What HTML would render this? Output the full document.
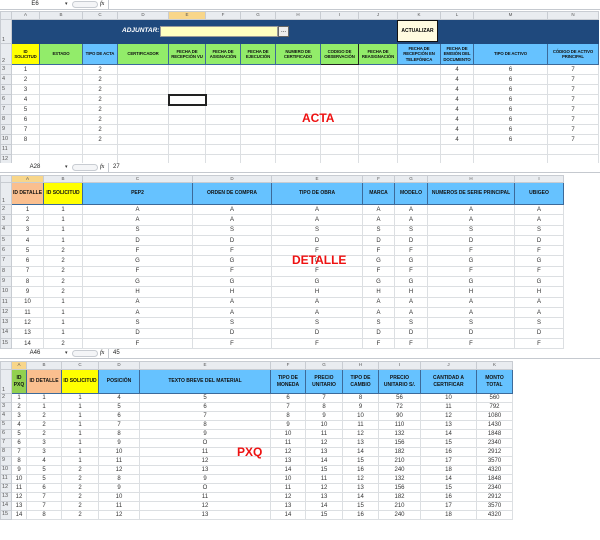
<!DOCTYPE html>
<html><head><meta charset="utf-8"><style>
*{margin:0;padding:0;box-sizing:border-box}
body{width:600px;height:540px;background:#fff;position:relative;overflow:hidden;font-family:"Liberation Sans",sans-serif}
.fb{position:absolute;left:0;width:600px;height:10px;background:#fff;border-bottom:1px solid #c5c9cf}
.fb .nb{position:absolute;left:0;top:0;width:70px;height:9px;font-size:6px;line-height:9px;text-align:center;color:#222}
.fb .ar{position:absolute;left:65px;top:0;font-size:5px;line-height:9px;color:#333}
.fb .pill{position:absolute;left:72px;top:1px;width:26px;height:7px;border:1px solid #c8ccd2;border-radius:4px;background:#f4f5f7}
.fb .fx{position:absolute;left:100px;top:0;font-size:6px;line-height:9px;font-style:italic;font-family:"Liberation Serif",serif}
.fb .dv{position:absolute;left:108px;top:0;width:1px;height:10px;background:#c5c9cf}
.fb .v{position:absolute;left:113px;top:0;font-size:6px;line-height:9px;color:#222}
table{position:absolute;border-collapse:collapse;table-layout:fixed}
td{border:1px solid #dcdfe2;font-size:6px;text-align:center;padding:0;overflow:hidden;white-space:nowrap;color:#333;line-height:1}
td.c{background:#e9ecf0;color:#555;font-size:4.5px;border-color:#c8ccd2}
td.s{background:#f8d68a}
td.r{background:#e9ecf0;color:#555;font-size:5.5px;text-align:left;padding-left:1px;border-color:#c8ccd2}
td.h{font-weight:bold;font-size:5px;color:#111;white-space:normal;line-height:1.3;border:1px solid #3c6a9a}
.t1 td.h{font-size:4.3px;letter-spacing:-0.1px;line-height:1.25}
.y{background:#ffff00}.g{background:#92ec6a}.b{background:#66c2ff}.p{background:#fabf8f}.gg{background:#92d050}
.lbl{position:absolute;color:#ee1111;font-weight:bold;font-size:12px}
</style></head><body>

<div class="fb" style="top:0"><div class="nb">E6</div><div class="ar">▾</div><div class="pill"></div><div class="fx">fx</div><div class="dv"></div></div>

<table class="t1" style="left:0;top:11px;width:598px">
<colgroup><col style="width:11px"><col style="width:28px"><col style="width:43px"><col style="width:35px"><col style="width:51px"><col style="width:37px"><col style="width:35px"><col style="width:35px"><col style="width:45px"><col style="width:38px"><col style="width:39px"><col style="width:43px"><col style="width:33px"><col style="width:74px"><col style="width:51px"></colgroup>
<tr style="height:8px"><td class="c"></td><td class="c">A</td><td class="c">B</td><td class="c">C</td><td class="c">D</td><td class="c s">E</td><td class="c">F</td><td class="c">G</td><td class="c">H</td><td class="c">I</td><td class="c">J</td><td class="c">K</td><td class="c">L</td><td class="c">M</td><td class="c">N</td></tr>
<tr style="height:24px"><td class="r" style="vertical-align:bottom">1</td><td colspan="14" style="background:#1f497d;border-color:#1f497d"></td></tr>
<tr style="height:21px"><td class="r" style="vertical-align:bottom">2</td><td class="h y">ID<br>SOLICITUD</td><td class="h g">ESTADO</td><td class="h b">TIPO DE ACTA</td><td class="h g">CERTIFICADOR</td><td class="h g">FECHA DE RECEPCIÓN VU</td><td class="h g">FECHA DE ASIGNACIÓN</td><td class="h g">FECHA DE EJECUCIÓN</td><td class="h g">NUMERO DE CERTIFICADO</td><td class="h g" style="border:1px solid #222">CODIGO DE OBSERVACIÓN</td><td class="h g">FECHA DE REASIGNACIÓN</td><td class="h b">FECHA DE RECEPCIÓN EN TELEFÓNICA</td><td class="h b">FECHA DE EMISIÓN DEL DOCUMENTO</td><td class="h b">TIPO DE ACTIVO</td><td class="h b">CÓDIGO DE ACTIVO PRINCIPAL</td></tr>
<tr style="height:10px"><td class="r">3</td><td>1</td><td></td><td>2</td><td></td><td></td><td></td><td></td><td></td><td></td><td></td><td></td><td>4</td><td>6</td><td>7</td></tr>
<tr style="height:10px"><td class="r">4</td><td>2</td><td></td><td>2</td><td></td><td></td><td></td><td></td><td></td><td></td><td></td><td></td><td>4</td><td>6</td><td>7</td></tr>
<tr style="height:10px"><td class="r">5</td><td>3</td><td></td><td>2</td><td></td><td></td><td></td><td></td><td></td><td></td><td></td><td></td><td>4</td><td>6</td><td>7</td></tr>
<tr style="height:10px"><td class="r s">6</td><td>4</td><td></td><td>2</td><td></td><td style="border:2px solid #222"></td><td></td><td></td><td></td><td></td><td></td><td></td><td>4</td><td>6</td><td>7</td></tr>
<tr style="height:10px"><td class="r">7</td><td>5</td><td></td><td>2</td><td></td><td></td><td></td><td></td><td></td><td></td><td></td><td></td><td>4</td><td>6</td><td>7</td></tr>
<tr style="height:10px"><td class="r">8</td><td>6</td><td></td><td>2</td><td></td><td></td><td></td><td></td><td></td><td></td><td></td><td></td><td>4</td><td>6</td><td>7</td></tr>
<tr style="height:10px"><td class="r">9</td><td>7</td><td></td><td>2</td><td></td><td></td><td></td><td></td><td></td><td></td><td></td><td></td><td>4</td><td>6</td><td>7</td></tr>
<tr style="height:10px"><td class="r">10</td><td>8</td><td></td><td>2</td><td></td><td></td><td></td><td></td><td></td><td></td><td></td><td></td><td>4</td><td>6</td><td>7</td></tr>
<tr style="height:10px"><td class="r">11</td><td></td><td></td><td></td><td></td><td></td><td></td><td></td><td></td><td></td><td></td><td></td><td></td><td></td><td></td></tr>
<tr style="height:10px"><td class="r">12</td><td></td><td></td><td></td><td></td><td></td><td></td><td></td><td></td><td></td><td></td><td></td><td></td><td></td><td></td></tr>
</table>
<div style="position:absolute;left:122px;top:27px;color:#fff;font-weight:bold;font-style:italic;font-size:6.5px">ADJUNTAR:</div>
<div style="position:absolute;left:160px;top:26px;width:118px;height:11px;background:#ffffc0;border:1px solid #999"></div>
<div style="position:absolute;left:278px;top:26px;width:11px;height:11px;background:#eee;border:1px solid #666;font-size:6px;line-height:8px;text-align:center">...</div>
<div style="position:absolute;left:397px;top:20px;width:41px;height:22px;background:#fffbe0;border:1px solid #111;font-size:5px;font-weight:bold;line-height:20px;text-align:center">ACTUALIZAR</div>
<div class="lbl" style="left:302px;top:111px">ACTA</div>

<div class="fb" style="top:163px"><div class="nb">A28</div><div class="ar">▾</div><div class="pill"></div><div class="fx">fx</div><div class="dv"></div><div class="v">27</div></div>

<table style="left:0;top:175px;width:563px">
<colgroup><col style="width:11px"><col style="width:32px"><col style="width:39px"><col style="width:110px"><col style="width:79px"><col style="width:91px"><col style="width:32px"><col style="width:33px"><col style="width:87px"><col style="width:49px"></colgroup>
<tr style="height:7px"><td class="c"></td><td class="c s">A</td><td class="c">B</td><td class="c">C</td><td class="c">D</td><td class="c">E</td><td class="c">F</td><td class="c">G</td><td class="c">H</td><td class="c">I</td></tr>
<tr style="height:22px"><td class="r" style="vertical-align:bottom">1</td><td class="h p">ID DETALLE</td><td class="h y">ID SOLICITUD</td><td class="h b">PEP2</td><td class="h b">ORDEN DE COMPRA</td><td class="h b">TIPO DE OBRA</td><td class="h b">MARCA</td><td class="h b">MODELO</td><td class="h b">NUMEROS DE SERIE PRINCIPAL</td><td class="h b">UBIGEO</td></tr>
<tr style="height:10.3px"><td class="r">2</td><td>1</td><td>1</td><td>A</td><td>A</td><td>A</td><td>A</td><td>A</td><td>A</td><td>A</td></tr>
<tr style="height:10.3px"><td class="r">3</td><td>2</td><td>1</td><td>A</td><td>A</td><td>A</td><td>A</td><td>A</td><td>A</td><td>A</td></tr>
<tr style="height:10.3px"><td class="r">4</td><td>3</td><td>1</td><td>S</td><td>S</td><td>S</td><td>S</td><td>S</td><td>S</td><td>S</td></tr>
<tr style="height:10.3px"><td class="r">5</td><td>4</td><td>1</td><td>D</td><td>D</td><td>D</td><td>D</td><td>D</td><td>D</td><td>D</td></tr>
<tr style="height:10.3px"><td class="r">6</td><td>5</td><td>2</td><td>F</td><td>F</td><td>F</td><td>F</td><td>F</td><td>F</td><td>F</td></tr>
<tr style="height:10.3px"><td class="r">7</td><td>6</td><td>2</td><td>G</td><td>G</td><td>G</td><td>G</td><td>G</td><td>G</td><td>G</td></tr>
<tr style="height:10.3px"><td class="r">8</td><td>7</td><td>2</td><td>F</td><td>F</td><td>F</td><td>F</td><td>F</td><td>F</td><td>F</td></tr>
<tr style="height:10.3px"><td class="r">9</td><td>8</td><td>2</td><td>G</td><td>G</td><td>G</td><td>G</td><td>G</td><td>G</td><td>G</td></tr>
<tr style="height:10.3px"><td class="r">10</td><td>9</td><td>2</td><td>H</td><td>H</td><td>H</td><td>H</td><td>H</td><td>H</td><td>H</td></tr>
<tr style="height:10.3px"><td class="r">11</td><td>10</td><td>1</td><td>A</td><td>A</td><td>A</td><td>A</td><td>A</td><td>A</td><td>A</td></tr>
<tr style="height:10.3px"><td class="r">12</td><td>11</td><td>1</td><td>A</td><td>A</td><td>A</td><td>A</td><td>A</td><td>A</td><td>A</td></tr>
<tr style="height:10.3px"><td class="r">13</td><td>12</td><td>1</td><td>S</td><td>S</td><td>S</td><td>S</td><td>S</td><td>S</td><td>S</td></tr>
<tr style="height:10.3px"><td class="r">14</td><td>13</td><td>1</td><td>D</td><td>D</td><td>D</td><td>D</td><td>D</td><td>D</td><td>D</td></tr>
<tr style="height:10.3px"><td class="r">15</td><td>14</td><td>2</td><td>F</td><td>F</td><td>F</td><td>F</td><td>F</td><td>F</td><td>F</td></tr>
</table>
<div class="lbl" style="left:292px;top:253px">DETALLE</div>

<div class="fb" style="top:349px"><div class="nb">A46</div><div class="ar">▾</div><div class="pill"></div><div class="fx">fx</div><div class="dv"></div><div class="v">45</div></div>

<table style="left:0;top:361px;width:512px">
<colgroup><col style="width:11px"><col style="width:15px"><col style="width:35px"><col style="width:37px"><col style="width:41px"><col style="width:131px"><col style="width:35px"><col style="width:37px"><col style="width:36px"><col style="width:42px"><col style="width:56px"><col style="width:36px"></colgroup>
<tr style="height:8px"><td class="c"></td><td class="c s">A</td><td class="c">B</td><td class="c">C</td><td class="c">D</td><td class="c">E</td><td class="c">F</td><td class="c">G</td><td class="c">H</td><td class="c">I</td><td class="c">J</td><td class="c">K</td></tr>
<tr style="height:24px"><td class="r" style="vertical-align:bottom">1</td><td class="h gg">ID PXQ</td><td class="h p">ID DETALLE</td><td class="h y">ID SOLICITUD</td><td class="h b">POSICIÓN</td><td class="h b">TEXTO BREVE DEL MATERIAL</td><td class="h b">TIPO DE MONEDA</td><td class="h b">PRECIO UNITARIO</td><td class="h b">TIPO DE CAMBIO</td><td class="h b">PRECIO UNITARIO S/.</td><td class="h b">CANTIDAD A CERTIFICAR</td><td class="h b">MONTO TOTAL</td></tr>
<tr style="height:9px"><td class="r">2</td><td>1</td><td>1</td><td>1</td><td>4</td><td>5</td><td>6</td><td>7</td><td>8</td><td>56</td><td>10</td><td>560</td></tr>
<tr style="height:9px"><td class="r">3</td><td>2</td><td>1</td><td>1</td><td>5</td><td>6</td><td>7</td><td>8</td><td>9</td><td>72</td><td>11</td><td>792</td></tr>
<tr style="height:9px"><td class="r">4</td><td>3</td><td>2</td><td>1</td><td>6</td><td>7</td><td>8</td><td>9</td><td>10</td><td>90</td><td>12</td><td>1080</td></tr>
<tr style="height:9px"><td class="r">5</td><td>4</td><td>2</td><td>1</td><td>7</td><td>8</td><td>9</td><td>10</td><td>11</td><td>110</td><td>13</td><td>1430</td></tr>
<tr style="height:9px"><td class="r">6</td><td>5</td><td>2</td><td>1</td><td>8</td><td>9</td><td>10</td><td>11</td><td>12</td><td>132</td><td>14</td><td>1848</td></tr>
<tr style="height:9px"><td class="r">7</td><td>6</td><td>3</td><td>1</td><td>9</td><td>O</td><td>11</td><td>12</td><td>13</td><td>156</td><td>15</td><td>2340</td></tr>
<tr style="height:9px"><td class="r">8</td><td>7</td><td>3</td><td>1</td><td>10</td><td>11</td><td>12</td><td>13</td><td>14</td><td>182</td><td>16</td><td>2912</td></tr>
<tr style="height:9px"><td class="r">9</td><td>8</td><td>4</td><td>1</td><td>11</td><td>12</td><td>13</td><td>14</td><td>15</td><td>210</td><td>17</td><td>3570</td></tr>
<tr style="height:9px"><td class="r">10</td><td>9</td><td>5</td><td>2</td><td>12</td><td>13</td><td>14</td><td>15</td><td>16</td><td>240</td><td>18</td><td>4320</td></tr>
<tr style="height:9px"><td class="r">11</td><td>10</td><td>5</td><td>2</td><td>8</td><td>9</td><td>10</td><td>11</td><td>12</td><td>132</td><td>14</td><td>1848</td></tr>
<tr style="height:9px"><td class="r">12</td><td>11</td><td>6</td><td>2</td><td>9</td><td>O</td><td>11</td><td>12</td><td>13</td><td>156</td><td>15</td><td>2340</td></tr>
<tr style="height:9px"><td class="r">13</td><td>12</td><td>7</td><td>2</td><td>10</td><td>11</td><td>12</td><td>13</td><td>14</td><td>182</td><td>16</td><td>2912</td></tr>
<tr style="height:9px"><td class="r">14</td><td>13</td><td>7</td><td>2</td><td>11</td><td>12</td><td>13</td><td>14</td><td>15</td><td>210</td><td>17</td><td>3570</td></tr>
<tr style="height:9px"><td class="r">15</td><td>14</td><td>8</td><td>2</td><td>12</td><td>13</td><td>14</td><td>15</td><td>16</td><td>240</td><td>18</td><td>4320</td></tr>
</table>
<div class="lbl" style="left:237px;top:445px">PXQ</div>
</body></html>
